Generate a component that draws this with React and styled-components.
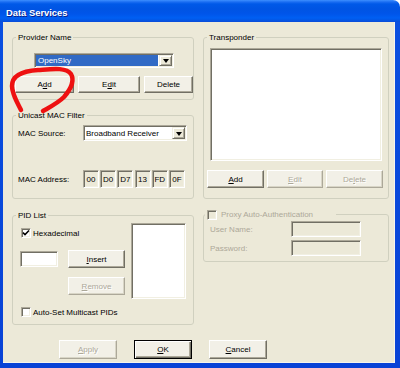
import React from "react";
import styled, { createGlobalStyle, css } from "styled-components";

const Global = createGlobalStyle`
  html, body { margin: 0; padding: 0; background: #ffffff; }
  #root { width: 400px; height: 368px; }
`;

const Window = styled.div`
  position: relative;
  width: 400px;
  height: 368px;
  overflow: hidden;
  display: flex;
  flex-direction: column;
  border-top-right-radius: 7px;
  font-family: "Liberation Sans", Arial, sans-serif;
  font-size: 8px;
  color: #000;
  box-sizing: border-box;
  *, *::before, *::after { box-sizing: border-box; }
`;

const TitleBar = styled.div`
  flex: none;
  height: 22px;
  display: flex;
  align-items: center;
  padding: 3px 0 0 6px;
  color: #fff;
  font-weight: bold;
  font-size: 9.4px;
  text-shadow: 1px 1px #0a1f8a;
  background: linear-gradient(
    180deg,
    #3d8fff 0px,
    #1a6df2 2px,
    #0059e8 4px,
    #0054e3 9px,
    #0055ea 14px,
    #005ff3 18px,
    #0357e6 20px,
    #0a4bd8 22px
  );
`;

const Frame = styled.div`
  flex: 1;
  display: flex;
  padding: 0 5px 5px 3px;
  background: linear-gradient(180deg, #0a4fe0, #0842d6);
`;

const Body = styled.div`
  flex: 1;
  display: flex;
  flex-direction: column;
  padding: 10px 0 0 9px;
  background: #ece9d8;
  box-shadow: inset -1px -1px #f6f4ec;
`;

const Columns = styled.div`
  display: grid;
  grid-template-columns: 182px 186px;
  column-gap: 9px;
  align-items: ${(p) => p.$align || "stretch"};
  margin-top: ${(p) => p.$mt || 0}px;
`;

const Stack = styled.div`
  display: flex;
  flex-direction: column;
  gap: 10px;
`;

const Group = styled.fieldset`
  margin: ${(p) => p.$mt || 0}px 0 0 0;
  padding: 0;
  min-width: 0;
  border: 1px solid #d0d0bf;
  border-radius: 3px;
`;

const Legend = styled.legend`
  display: flex;
  align-items: center;
  gap: 4px;
  height: 11px;
  line-height: 11px;
  margin-left: ${(p) => p.$ml ?? 3}px;
  padding: 0 ${(p) => p.$pr ?? 2}px 0 2px;
  color: ${(p) => (p.$disabled ? "#aca899" : "#000")};
  white-space: nowrap;
`;

const ColumnContent = styled.div`
  display: flex;
  flex-direction: column;
  align-items: flex-start;
  padding: ${(p) => p.$pad};
  gap: ${(p) => p.$gap || 0}px;
`;

const FormGrid = styled.div`
  display: grid;
  grid-template-columns: ${(p) => p.$cols};
  row-gap: ${(p) => p.$rowGap}px;
  align-items: center;
  padding: ${(p) => p.$pad};
`;

const Label = styled.span`
  white-space: nowrap;
  color: ${(p) => (p.$disabled ? "#aca899" : "#000")};
`;

const ButtonRow = styled.div`
  display: flex;
  gap: ${(p) => p.$gap}px;
  margin-left: ${(p) => p.$ml || 0}px;
`;

const Button = styled.button`
  width: ${(p) => p.$w}px;
  height: ${(p) => p.$h || 18}px;
  margin: 0 0 0 ${(p) => p.$ml || 0}px;
  padding: 0;
  font-family: inherit;
  font-size: 8px;
  color: #000;
  background: #f2f0e7;
  border: 1px solid;
  border-color: #ffffff #716f64 #716f64 #ffffff;
  box-shadow: inset -1px -1px #aca899;
  white-space: nowrap;
  u { text-decoration-thickness: 1px; text-underline-offset: 1px; }
  &:disabled {
    color: #aca899;
    text-shadow: 1px 1px #ffffff;
    border-color: #ffffff #aca899 #aca899 #ffffff;
    box-shadow: inset -1px -1px #d8d5c6;
  }
  ${(p) =>
    p.$default &&
    css`
      border-color: #000;
      box-shadow: inset 1px 1px #ffffff, inset -1px -1px #716f64,
        inset -2px -2px #aca899;
    `}
`;

const sunken = css`
  border: 1px solid;
  border-color: #aca899 #ffffff #ffffff #aca899;
  box-shadow: inset 1px 1px #716f64, inset -1px -1px #f1efe2;
`;

const Combo = styled.div`
  display: flex;
  width: ${(p) => p.$w}px;
  height: ${(p) => p.$h}px;
  margin-left: ${(p) => p.$ml || 0}px;
  padding: 1px 1px 1px 1px;
  background: #fff;
  ${sunken};
`;

const ComboField = styled.div`
  flex: 1;
  display: flex;
  align-items: center;
  padding: 0 1px;
`;

const ComboText = styled.span`
  flex: 1;
  align-self: stretch;
  display: flex;
  align-items: center;
  padding-left: ${(p) => (p.$selected ? 2 : 1)}px;
  margin-right: 1px;
  color: ${(p) => (p.$selected ? "#fff" : "#000")};
  background: ${(p) => (p.$selected ? "#316ac5" : "transparent")};
  white-space: nowrap;
`;

const DropButton = styled.div`
  width: 13px;
  flex: none;
  display: flex;
  align-items: center;
  justify-content: center;
  background: #ece9d8;
  border: 1px solid;
  border-color: #f1efe2 #716f64 #716f64 #f1efe2;
  box-shadow: inset 1px 1px #fff, inset -1px -1px #aca899;
`;

const Arrow = styled.span`
  width: 0;
  height: 0;
  margin-top: 1px;
  border-left: 3.5px solid transparent;
  border-right: 3.5px solid transparent;
  border-top: 4px solid #000;
`;

const ListBox = styled.div`
  width: ${(p) => p.$w}px;
  height: ${(p) => p.$h}px;
  margin-left: ${(p) => p.$ml || 0}px;
  background: #fff;
  ${sunken};
`;

const EditBox = styled.div`
  width: ${(p) => p.$w}px;
  height: ${(p) => p.$h}px;
  display: flex;
  align-items: center;
  justify-content: center;
  background: ${(p) => (p.$beige ? "#ece9d8" : "#fff")};
  ${sunken};
`;

const MacRow = styled.div`
  display: flex;
  gap: 1.2px;
`;

const CheckRow = styled.label`
  display: flex;
  align-items: center;
  gap: 2px;
  height: 10px;
  margin-left: ${(p) => p.$ml || 0}px;
  white-space: nowrap;
  color: ${(p) => (p.$disabled ? "#aca899" : "#000")};
`;

const CheckBox = styled.span`
  width: 10px;
  height: 10px;
  flex: none;
  display: inline-flex;
  align-items: center;
  justify-content: center;
  background: ${(p) => (p.$disabled ? "#ece9d8" : "#fff")};
  ${sunken};
`;

const PidGrid = styled.div`
  display: grid;
  grid-template-columns: 105px 55px;
  column-gap: 6px;
  padding: 2px 7px 7px 7px;
`;

const PidLeft = styled.div`
  display: flex;
  flex-direction: column;
  align-items: flex-start;
  padding-top: 5px;
`;

const InsertRow = styled.div`
  display: flex;
  align-items: flex-start;
  gap: 10px;
  margin-top: 12px;
`;

const FullRow = styled.div`
  grid-column: 1 / -1;
  margin-top: 8px;
`;

const BottomBar = styled.div`
  display: flex;
  gap: 17px;
  margin-top: 15px;
  padding-left: 47px;
`;

const Overlay = styled.svg`
  position: absolute;
  left: 0;
  top: 0;
  pointer-events: none;
`;

const Check = () => (
  <svg width="8" height="8" viewBox="0 0 8 8">
    <path d="M1 3.6 L3 5.6 L7 1.4" fill="none" stroke="#000" strokeWidth="1.5" />
  </svg>
);

const MAC = ["00", "D0", "D7", "13", "FD", "0F"];

export default function App() {
  return (
    <>
      <Global />
      <Window>
        <TitleBar>Data Services</TitleBar>
        <Frame>
          <Body>
            <Columns>
              <Stack>
                <Group>
                  <Legend>Provider Name</Legend>
                  <ColumnContent $pad="10px 2px 6px 2px" $gap={8}>
                    <Combo $w={140} $h={15} $ml={19}>
                      <ComboText $selected>OpenSky</ComboText>
                      <DropButton>
                        <Arrow />
                      </DropButton>
                    </Combo>
                    <ButtonRow $gap={4}>
                      <Button $w={59} $h={17}>
                        A<u>d</u>d
                      </Button>
                      <Button $w={62} $h={17}>
                        E<u>d</u>it
                      </Button>
                      <Button $w={49} $h={17}>
                        Delete
                      </Button>
                    </ButtonRow>
                  </ColumnContent>
                </Group>
                <Group>
                  <Legend>Unicast MAC Filter</Legend>
                  <FormGrid $cols="65px auto" $rowGap={29} $pad="4px 0 10px 5px">
                    <Label>MAC Source:</Label>
                    <Combo $w={104} $h={16}>
                      <ComboText>Broadband Receiver</ComboText>
                      <DropButton>
                        <Arrow />
                      </DropButton>
                    </Combo>
                    <Label>MAC Address:</Label>
                    <MacRow>
                      {MAC.map((m) => (
                        <EditBox key={m} $w={16} $h={18} $beige>
                          {m}
                        </EditBox>
                      ))}
                    </MacRow>
                  </FormGrid>
                </Group>
              </Stack>
              <Group>
                <Legend>Transponder</Legend>
                <ColumnContent $pad="5px 0 0 3px" $gap={9}>
                  <ListBox $w={172} $h={113} $ml={3} />
                  <ButtonRow $gap={3}>
                    <Button $w={57}>
                      <u>A</u>dd
                    </Button>
                    <Button $w={56} disabled>
                      <u>E</u>dit
                    </Button>
                    <Button $w={57} disabled>
                      De<u>l</u>ete
                    </Button>
                  </ButtonRow>
                </ColumnContent>
              </Group>
            </Columns>

            <Columns $align="start" $mt={11}>
              <Group>
                <Legend>PID List</Legend>
                <PidGrid>
                  <PidLeft>
                    <CheckRow $ml={1}>
                      <CheckBox>
                        <Check />
                      </CheckBox>
                      Hexadecimal
                    </CheckRow>
                    <InsertRow>
                      <EditBox $w={38} $h={16} style={{ marginTop: 1 }} />
                      <Button $w={57}>
                        <u>I</u>nsert
                      </Button>
                    </InsertRow>
                    <Button $w={57} $ml={48} disabled style={{ marginTop: 9 }}>
                      <u>R</u>emove
                    </Button>
                  </PidLeft>
                  <ListBox $w={55} $h={76} />
                  <FullRow>
                    <CheckRow $ml={1}>
                      <CheckBox />
                      Auto-Set Multicast PIDs
                    </CheckRow>
                  </FullRow>
                </PidGrid>
              </Group>
              <Group $mt={-1}>
                <Legend $disabled $ml={1} $pr={23}>
                  <CheckBox $disabled />
                  Proxy Auto-Authentication
                </Legend>
                <FormGrid $cols="81px 70px" $rowGap={3} $pad="1px 0 5px 6px">
                  <Label $disabled>User Name:</Label>
                  <EditBox $w={70} $h={16} $beige />
                  <Label $disabled>Password:</Label>
                  <EditBox $w={70} $h={16} $beige />
                </FormGrid>
              </Group>
            </Columns>

            <BottomBar>
              <Button $w={58} $h={19} disabled>
                <u>A</u>pply
              </Button>
              <Button $w={58} $h={19} $default>
                <u>O</u>K
              </Button>
              <Button $w={58} $h={19}>
                <u>C</u>ancel
              </Button>
            </BottomBar>
          </Body>
        </Frame>
        <Overlay width="400" height="368" viewBox="0 0 400 368">
          <path
            d="M21 110 C17 102, 12 94, 12 86 C12 76, 22 71, 38 70 C52 69, 66 67, 71 74 C75 81, 70 90, 64 97 C58 103, 50 107, 43 111"
            fill="none"
            stroke="#ee1111"
            strokeWidth="4.5"
            strokeLinecap="round"
            strokeLinejoin="round"
          />
        </Overlay>
      </Window>
    </>
  );
}
